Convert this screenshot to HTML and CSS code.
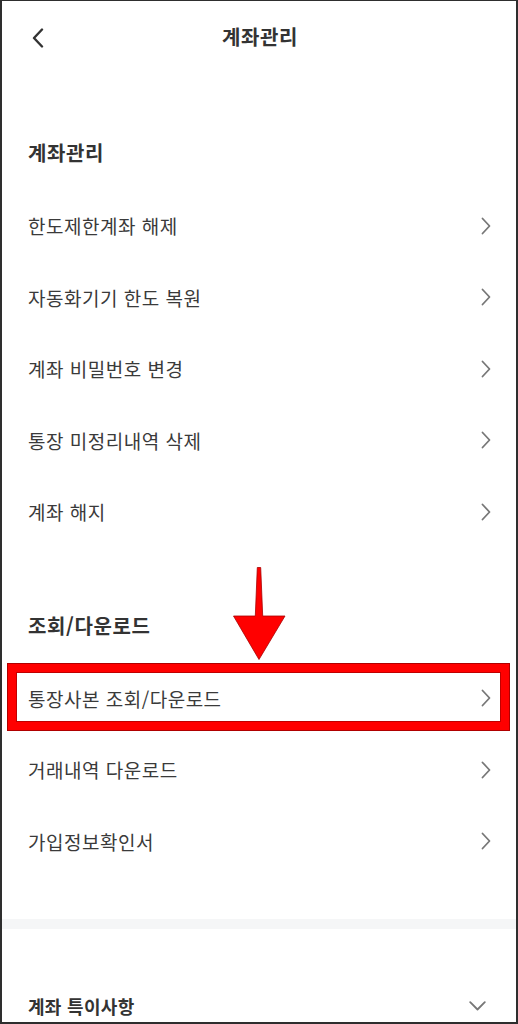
FILE: index.html
```html
<!DOCTYPE html>
<html lang="ko">
<head>
<meta charset="utf-8">
<title>계좌관리</title>
<link rel="stylesheet" href="styles.css">
</head>
<body>
<div class="frame">
  <header class="topbar">
    <span class="back">
      <svg width="12" height="20" viewBox="0 0 12 20"><path d="M10 1.5 L2 10 L10 18.5" fill="none" stroke="#333" stroke-width="2.4" stroke-linecap="round" stroke-linejoin="round"/></svg>
    </span>
    <h1 class="title">계좌관리</h1>
  </header>

  <section class="group first">
    <h2 class="group-title">계좌관리</h2>
    <ul class="list">
      <li class="row"><span>한도제한계좌 해제</span><svg class="chev" width="10" height="18" viewBox="0 0 10 18"><path d="M1.5 1.5 L8.5 9 L1.5 16.5" fill="none" stroke="#777" stroke-width="1.8" stroke-linecap="round" stroke-linejoin="round"/></svg></li>
      <li class="row"><span>자동화기기 한도 복원</span><svg class="chev" width="10" height="18" viewBox="0 0 10 18"><path d="M1.5 1.5 L8.5 9 L1.5 16.5" fill="none" stroke="#777" stroke-width="1.8" stroke-linecap="round" stroke-linejoin="round"/></svg></li>
      <li class="row"><span>계좌 비밀번호 변경</span><svg class="chev" width="10" height="18" viewBox="0 0 10 18"><path d="M1.5 1.5 L8.5 9 L1.5 16.5" fill="none" stroke="#777" stroke-width="1.8" stroke-linecap="round" stroke-linejoin="round"/></svg></li>
      <li class="row"><span>통장 미정리내역 삭제</span><svg class="chev" width="10" height="18" viewBox="0 0 10 18"><path d="M1.5 1.5 L8.5 9 L1.5 16.5" fill="none" stroke="#777" stroke-width="1.8" stroke-linecap="round" stroke-linejoin="round"/></svg></li>
      <li class="row"><span>계좌 해지</span><svg class="chev" width="10" height="18" viewBox="0 0 10 18"><path d="M1.5 1.5 L8.5 9 L1.5 16.5" fill="none" stroke="#777" stroke-width="1.8" stroke-linecap="round" stroke-linejoin="round"/></svg></li>
    </ul>
  </section>

  <section class="group second">
    <h2 class="group-title">조회/다운로드</h2>
    <ul class="list">
      <li class="row marked">
        <svg class="arrow" width="54" height="94" viewBox="0 0 54 94"><polygon points="24.3,0.5 27.7,0.5 29.7,49 52,49 26,92.5 0.5,49 22.3,49" fill="#ff0000" stroke="#a80000" stroke-width="0.8" stroke-linejoin="round"/></svg>
        <span class="mark-box"></span>
        <span>통장사본 조회/다운로드</span><svg class="chev" width="10" height="18" viewBox="0 0 10 18"><path d="M1.5 1.5 L8.5 9 L1.5 16.5" fill="none" stroke="#777" stroke-width="1.8" stroke-linecap="round" stroke-linejoin="round"/></svg>
      </li>
      <li class="row"><span>거래내역 다운로드</span><svg class="chev" width="10" height="18" viewBox="0 0 10 18"><path d="M1.5 1.5 L8.5 9 L1.5 16.5" fill="none" stroke="#777" stroke-width="1.8" stroke-linecap="round" stroke-linejoin="round"/></svg></li>
      <li class="row"><span>가입정보확인서</span><svg class="chev" width="10" height="18" viewBox="0 0 10 18"><path d="M1.5 1.5 L8.5 9 L1.5 16.5" fill="none" stroke="#777" stroke-width="1.8" stroke-linecap="round" stroke-linejoin="round"/></svg></li>
    </ul>
  </section>

  <div class="divider"></div>

  <section class="notice">
    <h2 class="notice-title">계좌 특이사항</h2>
    <svg class="down" width="17" height="10" viewBox="0 0 17 10"><path d="M1.2 1.2 L8.5 8.5 L15.8 1.2" fill="none" stroke="#777" stroke-width="1.8" stroke-linecap="round" stroke-linejoin="round"/></svg>
  </section>
</div>
</body>
</html>
```

FILE: styles.css
```css
* { box-sizing: border-box; }
html, body { margin: 0; padding: 0; background: #fff; }
body {
  font-family: "Noto Sans CJK KR", "Noto Sans", sans-serif;
  color: #333;
}
.frame {
  width: 518px;
  height: 1024px;
  overflow: hidden;
  border-style: solid;
  border-color: #2e2e2e;
  border-width: 1px 2px 2px 2px;
  background: #fff;
}
.topbar {
  height: 72px;
  display: flex;
  align-items: center;
  justify-content: center;
  position: relative;
}
.back {
  position: absolute;
  left: 30px;
  top: 27px;
  display: flex;
}
.title {
  margin: 0;
  padding-left: 2px;
  font-size: 20px;
  font-weight: 700;
  line-height: 30px;
  color: #333;
  letter-spacing: 0.6px;
}
.group { padding: 0; }
.group.first { padding-top: 65px; }
.group.second { padding-top: 63px; }
.group-title {
  margin: 0 0 22px 0;
  padding-left: 26px;
  font-size: 20px;
  font-weight: 700;
  line-height: 30px;
  color: #333;
  letter-spacing: 0.6px;
}
.list { list-style: none; margin: 0; padding: 0; }
.row {
  height: 71.5px;
  display: flex;
  align-items: center;
  justify-content: space-between;
  padding: 0 25px 0 26px;
  font-size: 19px;
  letter-spacing: 0.5px;
  color: #3a3a3a;
  position: relative;
}
.row .chev { flex: none; }
.marked .mark-box {
  position: absolute;
  left: 5px;
  right: 6px;
  top: 0;
  height: 68px;
  border: 9px solid #ff0000;
  outline: 1px solid #b00000;
  outline-offset: -1px;
  box-shadow: inset 0 0 0 1px #c00000;
}
.marked .arrow {
  position: absolute;
  left: 231px;
  top: -96px;
}
.divider {
  margin-top: 42px;
  height: 10px;
  background: #f5f6f7;
}
.notice {
  padding: 62px 30px 0 26px;
  display: flex;
  align-items: center;
  justify-content: space-between;
}
.notice-title {
  margin: 0;
  font-size: 18px;
  font-weight: 700;
  line-height: 30px;
  color: #333;
  letter-spacing: 0.3px;
}
.notice .down { flex: none; }
```
